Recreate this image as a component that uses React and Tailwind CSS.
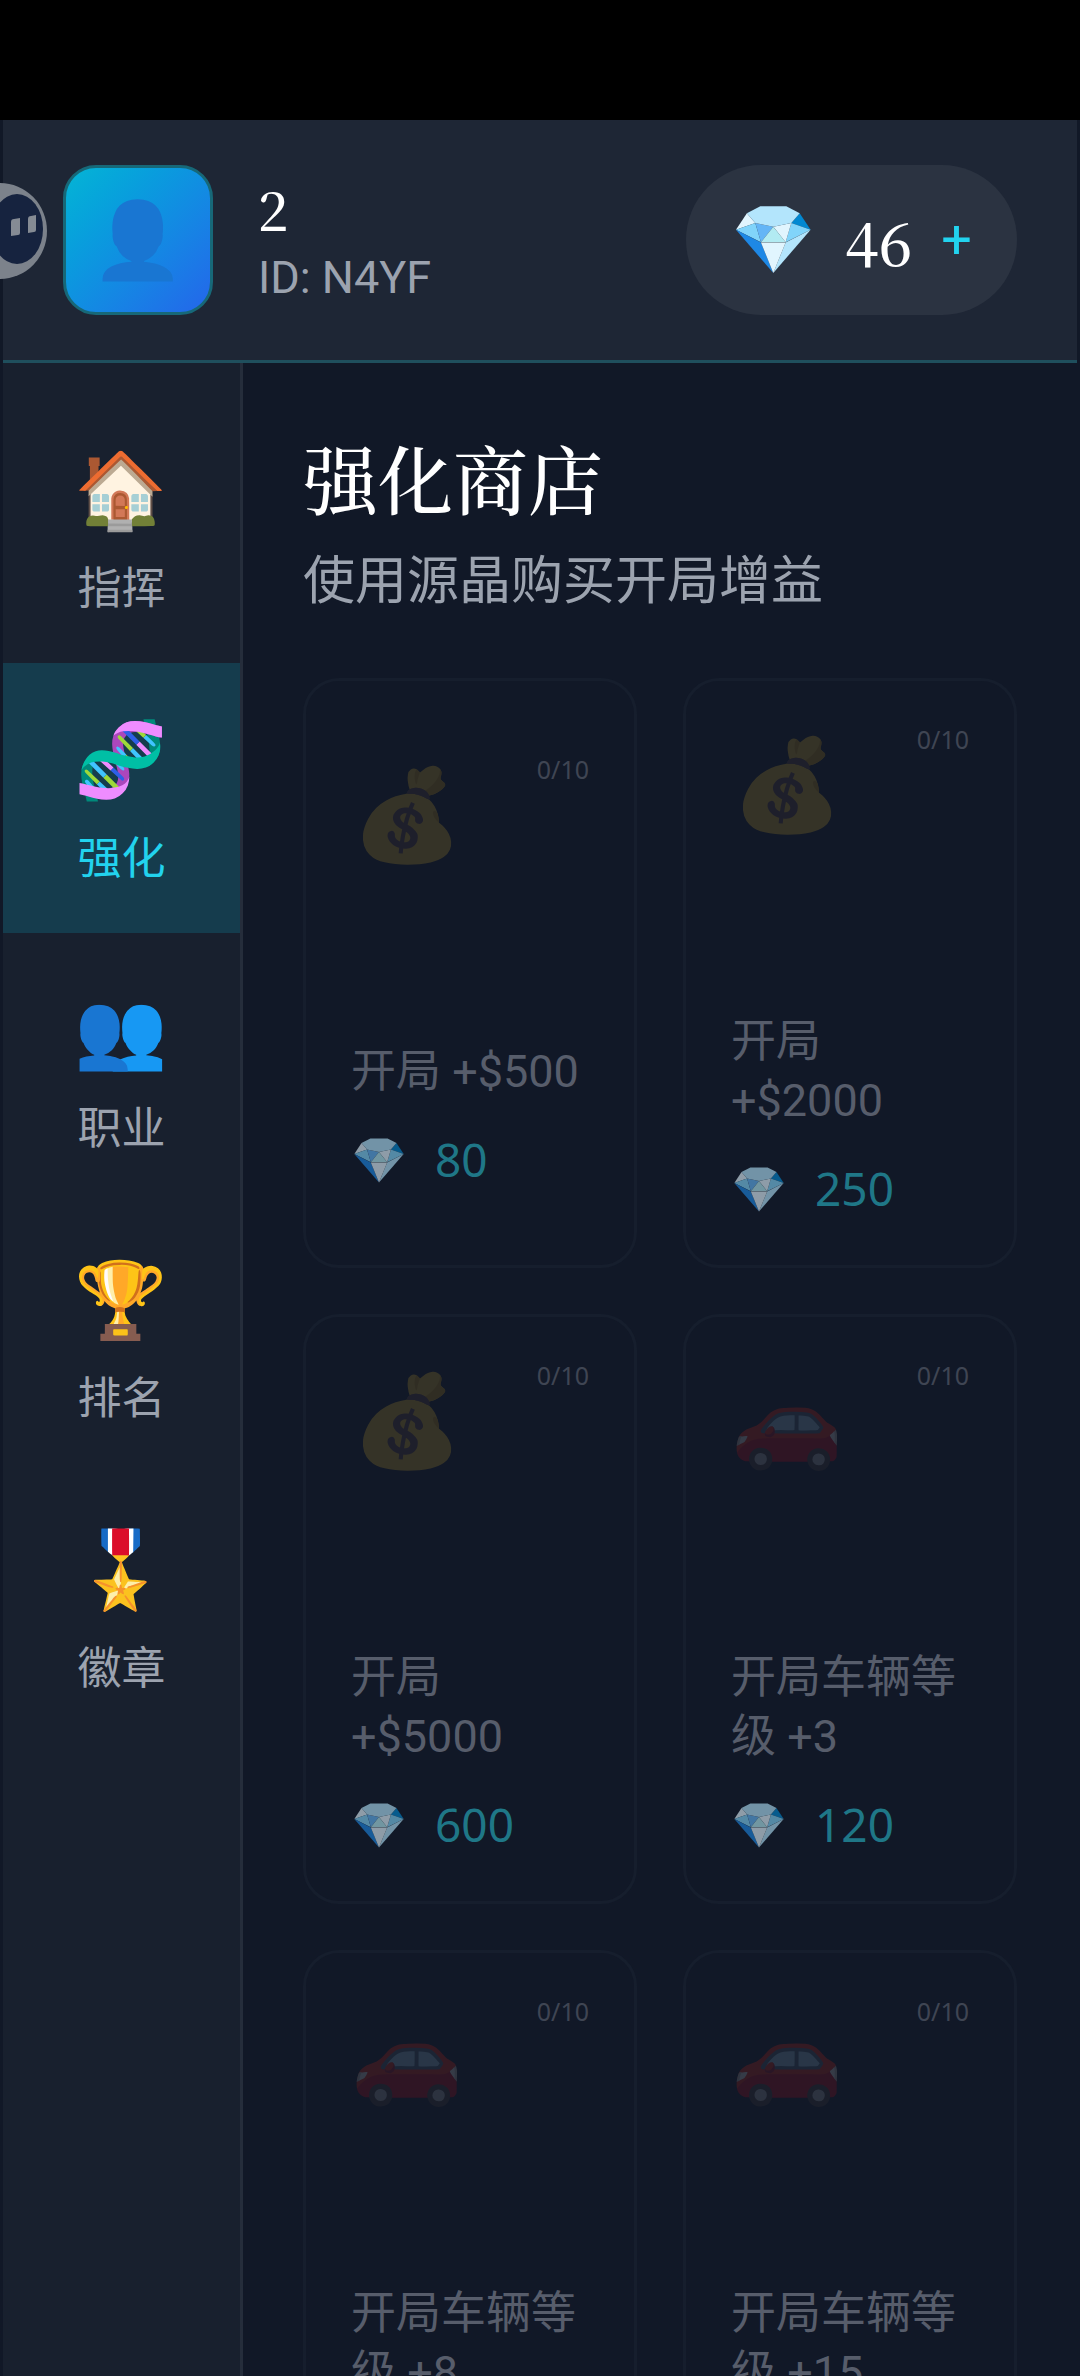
import { useState } from 'react';
import clsx from 'clsx';

const tabs = [
  { id: 'home', icon: '🏠', label: '指挥' },
  { id: 'upgrade', icon: '🧬', label: '强化' },
  { id: 'jobs', icon: '👥', label: '职业' },
  { id: 'rank', icon: '🏆', label: '排名' },
  { id: 'badge', icon: '🎖️', label: '徽章' },
];

const items = [
  { icon: '💰', desc: '开局 +$500', price: 80 },
  { icon: '💰', desc: '开局 +$2000', price: 250 },
  { icon: '💰', desc: '开局 +$5000', price: 600 },
  { icon: '🚗', desc: '开局车辆等级 +3', price: 120 },
  { icon: '🚗', desc: '开局车辆等级 +8', price: 300 },
  { icon: '🚗', desc: '开局车辆等级 +15', price: 600 },
];

function Emoji({ children, className }) {
  return (
    <span aria-hidden="true" className={clsx("font-['Noto_Color_Emoji']", className)}>
      {children}
    </span>
  );
}

function FloatingBall() {
  return (
    <svg className="absolute left-0 top-[62px] w-[48px] h-[98px]" viewBox="0 0 48 98">
      <ellipse cx="0" cy="49" rx="47" ry="48" fill="#7c828b" />
      <ellipse cx="17" cy="47" rx="26" ry="35" fill="#16233f" />
      <path d="M14 37 L20 36 V51 Q20 53 18 53 L11 54 V40 Q11 37 14 37Z" fill="#858b94" />
      <path d="M31 34 L36 33 V48 Q36 50 34 50 L28 51 V37 Q28 34 31 34Z" fill="#858b94" />
    </svg>
  );
}

function Header() {
  return (
    <header className="relative shrink-0 flex items-center justify-between mx-[3px] h-[243px] px-[60px] bg-[#1e2635] border-b-3 border-[#1f4f5d]">
      <div className="flex items-center gap-[45px]">
        <div className="flex items-center justify-center size-[150px] rounded-[33px] border-3 border-[#176878] bg-linear-to-br from-[#06b6d4] to-[#2563eb] bg-origin-border">
          <Emoji className="text-[75px] leading-[90px]">👤</Emoji>
        </div>
        <div className="flex flex-col gap-1">
          <span className="font-['Noto_Serif_CJK_SC',serif] font-medium text-[54px] leading-[72px] text-white">2</span>
          <span className="text-[45px] leading-[60px] text-[#9ca3af]">ID: N4YF</span>
        </div>
      </div>
      <div className="flex items-center gap-[29px] h-[150px] px-[45px] rounded-full bg-[#2b3341]">
        <Emoji className="text-[68px] leading-[84px]">💎</Emoji>
        <span className="font-['Noto_Serif_CJK_SC',serif] font-medium text-[60px] leading-[84px] text-white">46</span>
        <button type="button" aria-label="充值" className="text-[54px] leading-[60px] text-[#22d3ee]">
          +
        </button>
      </div>
    </header>
  );
}

function Sidebar({ active, onSelect }) {
  return (
    <nav className="shrink-0 w-[240px] pt-[30px] bg-[#18202e] border-r-3 border-[#252d3b]">
      {tabs.map((tab) => (
        <button
          key={tab.id}
          type="button"
          onClick={() => onSelect(tab.id)}
          className={clsx(
            'flex flex-col items-center justify-center gap-[21px] w-full h-[270px] pt-1',
            active === tab.id ? 'bg-[#153c4d] text-[#22d3ee]' : 'text-[#9ca3af]'
          )}
        >
          <Emoji className="text-[75px] leading-[96px]">{tab.icon}</Emoji>
          <span className="text-[44px] leading-[60px]">{tab.label}</span>
        </button>
      ))}
    </nav>
  );
}

function ItemCard({ item }) {
  return (
    <button
      type="button"
      className="flex flex-col justify-center min-h-[590px] px-[45px] text-left rounded-[36px] border-3 border-[#161e2d]"
    >
      <div className="flex items-start justify-between">
        <Emoji className="text-[90px] leading-[120px] opacity-15">{item.icon}</Emoji>
        <span className="font-['Noto_Sans'] text-[25px] leading-[26px] text-[#3f4553]">0/10</span>
      </div>
      <p className="mt-[166px] text-[45px] leading-[59px] text-[#575d6b]">{item.desc}</p>
      <div className="flex items-start gap-[28px] mt-[30px]">
        <Emoji className="text-[45px] leading-[60px] opacity-60">💎</Emoji>
        <span className="font-['Noto_Sans'] text-[46px] leading-[56px] text-[#1f7787]">{item.price}</span>
      </div>
    </button>
  );
}

export default function App() {
  const [active, setActive] = useState('upgrade');

  return (
    <div className="relative flex flex-col h-screen overflow-hidden bg-[#111827] font-[Roboto,'Noto_Sans_CJK_SC',sans-serif]">
      <div className="shrink-0 h-[120px] bg-black" />
      <div className="relative flex flex-col flex-1 min-h-0">
        <Header />
        <FloatingBall />
        <div className="flex flex-1 min-h-0 mx-[3px]">
          <Sidebar active={active} onSelect={setActive} />
          <main className="flex-1 min-w-0 px-[60px] pt-[60px] overflow-hidden">
            <h1 className="font-['Noto_Serif_CJK_SC',serif] font-medium text-[75px] leading-[108px] text-white">强化商店</h1>
            <p className="mt-[15px] text-[52px] leading-[72px] text-[#9ca3af]">使用源晶购买开局增益</p>
            <div className="grid grid-cols-2 gap-[46px] mt-[60px]">
              {items.map((item) => (
                <ItemCard key={item.desc} item={item} />
              ))}
            </div>
          </main>
        </div>
      </div>
    </div>
  );
}
